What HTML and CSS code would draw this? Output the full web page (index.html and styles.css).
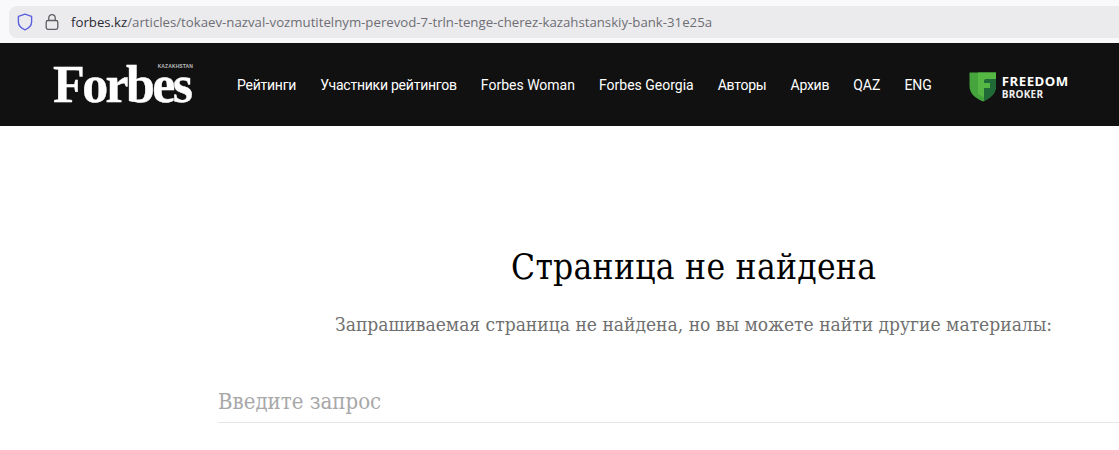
FILE: index.html
```html
<!DOCTYPE html>
<html lang="ru">
<head>
<meta charset="utf-8">
<title>Forbes.kz</title>
<link rel="stylesheet" href="styles.css">
</head>
<body>
<div class="browser">
  <div class="urlbar">
    <svg class="shield" width="16" height="18" viewBox="0 0 16 18"><path d="M8 1.200 14.600 3.400V9c0 3.600-2.800 6.200-6.600 7.800C4.200 15.200 1.400 12.600 1.400 9V3.400Z" fill="none" stroke="#5b60e0" stroke-width="1.400" stroke-linejoin="round"/></svg>
    <svg class="lock" width="14" height="18" viewBox="0 0 14 18"><path d="M3.800 7.500V4.800a3.200 3.200 0 0 1 6.400 0V7.500" fill="none" stroke="#5f5e66" stroke-width="1.300"/><rect x="1.200" y="7.500" width="11.600" height="8.800" rx="1.800" fill="none" stroke="#5f5e66" stroke-width="1.300"/></svg>
    <div class="url"><span class="host">forbes.kz</span>/articles/tokaev-nazval-vozmutitelnym-perevod-7-trln-tenge-cherez-kazahstanskiy-bank-31e25a</div>
  </div>
</div>
<header class="site-header">
  <div class="logo">
    <span class="logo-region">KAZAKHSTAN</span>
    <span class="logo-word">Forbes</span>
  </div>
  <nav class="nav">
    <a class="nav-cyr">Рейтинги</a>
    <a class="nav-cyr">Участники рейтингов</a>
    <a>Forbes Woman</a>
    <a>Forbes Georgia</a>
    <a class="nav-cyr">Авторы</a>
    <a class="nav-cyr">Архив</a>
    <a>QAZ</a>
    <a>ENG</a>
  </nav>
  <div class="partner">
    <svg class="partner-mark" width="28" height="30" viewBox="0 0 28 30">
      <path d="M0.500 0.500H27V14C27 21.500 21 26.500 14 29.500C6.500 26.500 0.500 21.500 0.500 14Z" fill="#45a53c"/>
      <path d="M9 0.500H27V7H15V25.500L9 22Z" fill="#55b845"/>
      <path d="M27 7V14C27 21.500 21 26.500 14 29.500L15 29V9.500C15 8 16 7 17.500 7Z" fill="#1f6a37"/>
      <path d="M15 11H21V16H15Z" fill="#55b845"/>
    </svg>
    <div class="partner-text">
      <span class="partner-name">FREEDOM</span>
      <span class="partner-sub">BROKER</span>
    </div>
  </div>
</header>
<main class="content">
  <h1 class="title">Страница не найдена</h1>
  <p class="lead">Запрашиваемая страница не найдена, но вы можете найти другие материалы:</p>
  <div class="search"><span class="placeholder">Введите запрос</span></div>
</main>
</body>
</html>
```
FILE: styles.css
```css
* { box-sizing: border-box; }
html, body { margin: 0; padding: 0; background: #fff; overflow: hidden; }
body { width: 1119px; height: 450px; }

.browser { height: 43px; background: #f9f9fb; padding: 6px 0 0 9px; }
.urlbar {
  height: 32px; background: #ebebee;
  border-radius: 8px 0 0 8px; display: flex; align-items: center; padding-left: 8px;
}
.shield { flex: none; margin-right: 12px; }
.lock { flex: none; margin-right: 12px; }
.url { font: 13.230px/32px "Open Sans", "Noto Sans", sans-serif; color: #6e6e73; white-space: nowrap; }
.host { color: #2b2a33; }

.site-header { height: 83px; background: #111; display: flex; align-items: center; padding-left: 53px; color: #fff; }
.logo { width: 140px; height: 44px; flex: none; display: flex; flex-direction: column; position: relative; }
.logo-word {
  font: bold 52px/44px "Liberation Serif", serif; letter-spacing: -2.600px; color: #fff; display: block; white-space: nowrap;
  -webkit-text-stroke: 0.400px #fff;
}
.logo-region { position: absolute; right: 0; top: 0; font: bold 5px/6px "Liberation Sans", sans-serif; color: #bbb; letter-spacing: 0.100px; }
.nav { display: flex; gap: 24px; margin-left: 44px; flex: none; }
.nav a { font: 14px/20px "Roboto", sans-serif; color: #fff; white-space: nowrap; }
.nav a.nav-cyr { letter-spacing: -0.240px; }
.partner { display: flex; align-items: center; margin: 4px 0 0 37px; flex: none; }
.partner-mark { flex: none; margin-right: 5px; }
.partner-text { display: flex; flex-direction: column; }
.partner-name { font: bold 13.200px/14px "Open Sans", sans-serif; letter-spacing: 0.500px; color: #fff; }
.partner-sub { font: bold 10px/12px "Open Sans", sans-serif; letter-spacing: 0.200px; color: #eee; }

.content { padding-top: 117px; display: flex; flex-direction: column; }
.title { margin: 0 0 0 511px; font: 400 35px/48px "DejaVu Serif", serif; font-stretch: condensed; letter-spacing: 0.300px; color: #000; white-space: nowrap; }
.lead { margin: 19px 0 0 335px; font: 400 19.060px/28px "DejaVu Serif", serif; font-stretch: condensed; color: #6f6f6f; white-space: nowrap; }
.search { margin: 50px 0 0 218px; height: 35px; border-bottom: 1px solid #e6e6e6; font: 400 22px/28px "DejaVu Serif", serif; font-stretch: condensed; color: #a8a8a8; }
.placeholder { display: block; }
```
